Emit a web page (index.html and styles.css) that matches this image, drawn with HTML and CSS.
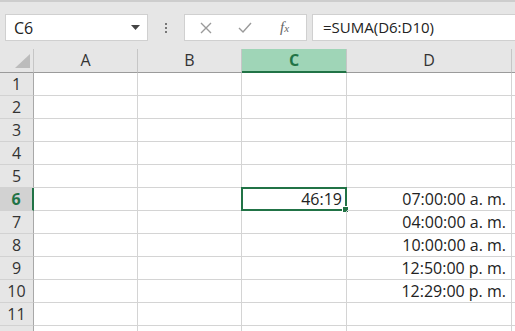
FILE: index.html
```html
<!DOCTYPE html>
<html lang="es">
<head>
  <meta charset="UTF-8">
  <title>Libro1 - Excel</title>
  <link rel="stylesheet" href="styles.css">
</head>
<body>
  <div class="barra">
    <div class="cuadro-nombre">
      <span>C6</span>
      <svg class="flecha" width="9" height="5" viewBox="0 0 9 5"><path d="M0 0H9L4.5 5Z" fill="#444"/></svg>
    </div>
    <div class="puntos">
      <i></i><i></i><i></i>
    </div>
    <div class="botones">
      <svg width="12" height="12" viewBox="0 0 12 12"><path d="M1 1L11 11M11 1L1 11" stroke="#9a9a9a" stroke-width="1.4"/></svg>
      <svg width="14" height="11" viewBox="0 0 14 11"><path d="M1 6L5 10L13 1" fill="none" stroke="#9a9a9a" stroke-width="1.4"/></svg>
      <span class="fx">f<small>x</small></span>
    </div>
    <div class="formula">=SUMA(D6:D10)</div>
  </div>

  <div class="hoja">
    <div class="esquina"><svg width="15" height="14" viewBox="0 0 15 14"><path d="M15 0V14H0Z" fill="#bcbcbc"/></svg></div>
    <div class="col">A</div>
    <div class="col">B</div>
    <div class="col activa">C</div>
    <div class="col">D</div>
    <div class="col"></div>

    <div class="fila">1</div><div class="celda"></div><div class="celda"></div><div class="celda"></div><div class="celda"></div><div class="celda"></div>
    <div class="fila">2</div><div class="celda"></div><div class="celda"></div><div class="celda"></div><div class="celda"></div><div class="celda"></div>
    <div class="fila">3</div><div class="celda"></div><div class="celda"></div><div class="celda"></div><div class="celda"></div><div class="celda"></div>
    <div class="fila">4</div><div class="celda"></div><div class="celda"></div><div class="celda"></div><div class="celda"></div><div class="celda"></div>
    <div class="fila">5</div><div class="celda"></div><div class="celda"></div><div class="celda"></div><div class="celda"></div><div class="celda"></div>
    <div class="fila activa">6</div><div class="celda"></div><div class="celda"></div><div class="celda seleccion">46:19<span class="tirador"></span></div><div class="celda">07:00:00 a. m.</div><div class="celda"></div>
    <div class="fila">7</div><div class="celda"></div><div class="celda"></div><div class="celda"></div><div class="celda">04:00:00 a. m.</div><div class="celda"></div>
    <div class="fila">8</div><div class="celda"></div><div class="celda"></div><div class="celda"></div><div class="celda">10:00:00 a. m.</div><div class="celda"></div>
    <div class="fila">9</div><div class="celda"></div><div class="celda"></div><div class="celda"></div><div class="celda">12:50:00 p. m.</div><div class="celda"></div>
    <div class="fila">10</div><div class="celda"></div><div class="celda"></div><div class="celda"></div><div class="celda">12:29:00 p. m.</div><div class="celda"></div>
    <div class="fila">11</div><div class="celda"></div><div class="celda"></div><div class="celda"></div><div class="celda"></div><div class="celda"></div>
    <div class="fila"></div><div class="celda"></div><div class="celda"></div><div class="celda"></div><div class="celda"></div><div class="celda"></div>
  </div>
</body>
</html>
```

FILE: styles.css
```css
body {
  margin: 0;
  font-family: "Open Sans", "Noto Sans", sans-serif;
  color: #222;
  overflow: hidden;
  background-color: #fff;
}

.barra {
  display: flex;
  align-items: center;
  height: 47px;
  background-color: #e6e6e6;
  border-top: 2px solid #cdcdcd;
  padding-left: 5px;
}

.cuadro-nombre {
  display: flex;
  align-items: center;
  justify-content: space-between;
  box-sizing: border-box;
  width: 143px;
  height: 27px;
  padding: 0 7px 0 8px;
  background-color: #fff;
  border: 1px solid #d0d0d0;
  font-size: 16px;
  margin-top: 4px;
}

.puntos {
  display: flex;
  flex-direction: column;
  gap: 2px;
  width: 36px;
  align-items: center;
  margin-top: 4px;
}

.puntos i {
  width: 2px;
  height: 2px;
  background-color: #777;
}

.botones {
  display: flex;
  align-items: center;
  box-sizing: border-box;
  width: 123px;
  height: 27px;
  padding-left: 15px;
  background-color: #fff;
  border: 1px solid #d0d0d0;
  margin-top: 4px;
  gap: 26px;
}

.fx {
  font-family: "Liberation Serif", serif;
  font-style: italic;
  font-size: 15px;
  color: #666;
  margin-left: 2px;
}

.fx small {
  font-size: 11px;
}

.formula {
  flex: 1;
  box-sizing: border-box;
  height: 27px;
  margin-left: 5px;
  padding-left: 10px;
  background-color: #fff;
  border: 1px solid #d0d0d0;
  border-right: none;
  font-size: 15px;
  line-height: 25px;
  margin-top: 4px;
}

.hoja {
  display: grid;
  grid-template-columns: 34px 104px 104px 105px 165px 1fr;
  grid-template-rows: 24px;
  grid-auto-rows: 23px;
}

.esquina {
  display: flex;
  align-items: flex-end;
  justify-content: flex-end;
  padding: 0 3px 4px 0;
  background-color: #e6e6e6;
  border-right: 1px solid #c6c6c6;
  border-bottom: 1px solid #9b9b9b;
}

.col {
  background-color: #e6e6e6;
  border-right: 1px solid #c6c6c6;
  border-bottom: 1px solid #9b9b9b;
  text-align: center;
  font-size: 16px;
  line-height: 23px;
  color: #333;
}

.col.activa {
  background-color: #9fd5b7;
  border-bottom: 2px solid #217346;
  color: #217346;
  font-weight: bold;
  line-height: 22px;
}

.fila {
  background-color: #e6e6e6;
  border-right: 1px solid #a8a8a8;
  border-bottom: 1px solid #d2d2d2;
  text-align: center;
  font-size: 16px;
  line-height: 22px;
  color: #333;
}

.fila.activa {
  background-color: #d2d2d2;
  border-right: 2px solid #217346;
  color: #217346;
  font-weight: bold;
}

.celda {
  position: relative;
  border-right: 1px solid #d4d4d4;
  border-bottom: 1px solid #d4d4d4;
  text-align: right;
  padding-right: 5px;
  font-size: 16px;
  line-height: 22px;
  color: #222;
}

.celda.seleccion {
  margin: -1px 0 0 -1px;
  border: 2px solid #217346;
  padding-right: 3px;
  line-height: 20px;
}

.tirador {
  position: absolute;
  right: -4px;
  bottom: -4px;
  width: 5px;
  height: 5px;
  background-color: #217346;
  border: 1px solid #fff;
}
```
